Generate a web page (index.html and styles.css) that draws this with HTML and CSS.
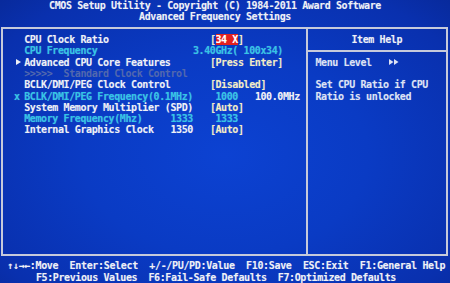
FILE: index.html
```html
<!DOCTYPE html>
<html lang="en">
<head>
    <meta charset="UTF-8">
    <meta name="viewport" content="width=device-width, initial-scale=1.0">
    <title>CMOS Setup Utility - Advanced Frequency Settings</title>
    <link rel="stylesheet" href="styles.css">
</head>
<body>
    <div class="screen">

        <header class="title">
            <div class="line">CMOS Setup Utility - Copyright (C) 1984-2011 Award Software</div>
            <div class="line">Advanced Frequency Settings</div>
        </header>

        <div class="frame">
            <section class="menu">
                <div class="row">
                    <span></span>
                    <span class="label">CPU Clock Ratio</span>
                    <span></span>
                    <span class="value"><span class="bracket">[</span><span class="selected">34 X</span><span class="bracket">]</span></span>
                </div>
                <div class="row cyan">
                    <span></span>
                    <span class="label">CPU Frequency</span>
                    <span class="cur">    3.40GHz( 100x34)</span>
                    <span></span>
                </div>
                <div class="row">
                    <span class="mark"><svg width="5" height="6" viewBox="0 0 5 6"><polygon points="0,0 5,3 0,6" fill="#eef0f6"/></svg></span>
                    <span class="label">Advanced CPU Core Features</span>
                    <span></span>
                    <span class="value">[Press Enter]</span>
                </div>
                <div class="row dim">
                    <span></span>
                    <span class="label">&gt;&gt;&gt;&gt;&gt;  Standard Clock Control</span>
                    <span></span>
                    <span></span>
                </div>
                <div class="row">
                    <span></span>
                    <span class="label">BCLK/DMI/PEG Clock Control</span>
                    <span></span>
                    <span class="value">[Disabled]</span>
                </div>
                <div class="row cyan">
                    <span class="cross">x</span>
                    <span class="label">BCLK/DMI/PEG Frequency(0.1MHz)</span>
                    <span></span>
                    <span class="value"> 1000   <span class="white">100.0MHz</span></span>
                </div>
                <div class="row">
                    <span></span>
                    <span class="label">System Memory Multiplier (SPD)</span>
                    <span></span>
                    <span class="value">[Auto]</span>
                </div>
                <div class="row cyan">
                    <span></span>
                    <span class="label">Memory Frequency(Mhz)</span>
                    <span class="cur">1333</span>
                    <span class="num"> 1333</span>
                </div>
                <div class="row">
                    <span></span>
                    <span class="label">Internal Graphics Clock</span>
                    <span class="cur">1350</span>
                    <span class="value">[Auto]</span>
                </div>
            </section>

            <aside class="help">
                <div class="help-head">Item Help</div>
                <div class="help-body">
                    <div class="level">
                        <span>Menu Level</span>
                        <svg class="arrows" width="10" height="6" viewBox="0 0 10 6"><polygon points="0,0 4.5,3 0,6" fill="#dde2f4"/><polygon points="5,0 9.5,3 5,6" fill="#dde2f4"/></svg>
                    </div>
                    <div class="line"></div>
                    <div class="line">Set CPU Ratio if CPU</div>
                    <div class="line">Ratio is unlocked</div>
                </div>
            </aside>
        </div>

        <footer class="keys">
            <div class="line first">&uarr;&darr;&rarr;&larr;:Move  Enter:Select  +/-/PU/PD:Value  F10:Save  ESC:Exit  F1:General Help</div>
            <div class="line second">F5:Previous Values  F6:Fail-Safe Defaults  F7:Optimized Defaults</div>
        </footer>

    </div>
</body>
</html>
```

FILE: styles.css
```css
:root {
    --c: 5.625px;
    --row: 11.32px;
}

body {
    margin: 0;
    padding: 0;
    background-color: #0a2ca8;
}

.screen {
    width: 450px;
    height: 283px;
    overflow: hidden;
    background: radial-gradient(ellipse at 50% 55%, #0c42d2 0%, #0a3bc4 45%, #0930ae 85%, #082a9c 100%);
    color: #eef0f6;
    font-family: 'DejaVu Sans Mono', 'Liberation Mono', monospace;
    font-weight: bold;
    font-size: 10px;
    letter-spacing: -0.396px;
    line-height: var(--row);
    text-shadow: 0 0 1px rgba(255, 255, 255, 0.25);
}

.line {
    height: var(--row);
    white-space: pre;
}

/* header */
.title {
    width: 338px;
    margin-left: 46px;
    text-align: center;
}

/* main box */
.frame {
    display: flex;
    box-sizing: border-box;
    width: 447px;
    height: 229px;
    margin: 4px 0 0 1px;
    border: 2px solid #c6cadb;
}

.menu {
    box-sizing: border-box;
    width: 304.5px;
    padding: 5.32px 0 0 10px;
    border-right: 2px solid #c6cadb;
}

.row {
    display: grid;
    grid-template-columns: calc(2 * var(--c)) calc(26 * var(--c)) calc(7 * var(--c)) auto;
    height: var(--row);
}

.row span {
    white-space: pre;
}

.row.cyan {
    color: #32c6e6;
}

.row.dim {
    color: #5268ae;
    text-shadow: none;
}

.mark {
    display: flex;
    align-items: center;
    padding-left: 3px;
}

.cross {
    padding-left: 1px;
}

.value {
    color: #f2ecc4;
}

.row.cyan .value,
.num {
    color: #32c6e6;
}

.white {
    color: #f2f2f6;
}

.selected {
    background-color: #e3201e;
    color: #ffffff;
}

.bracket {
    color: #f2ecc4;
}

/* help panel */
.help {
    flex: 1;
    padding-top: 5.32px;
}

.help-head {
    height: var(--row);
    text-align: center;
    padding-bottom: 4.66px;
    border-bottom: 2px solid #c6cadb;
    margin-bottom: 4.66px;
}

.help-body {
    padding-left: 8px;
    color: #dde2f4;
}

.level {
    display: flex;
    align-items: center;
    gap: calc(3 * var(--c));
    height: var(--row);
}

.arrows {
    flex: none;
}

/* bottom key legend */
.keys {
    margin-top: 4.7px;
}

.keys .first {
    margin-left: 7px;
    letter-spacing: -0.33px;
}

.keys .second {
    margin-left: 36px;
}
```
